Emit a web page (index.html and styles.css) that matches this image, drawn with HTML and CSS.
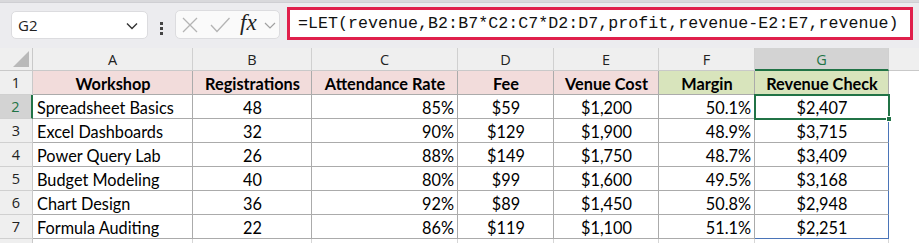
FILE: index.html
```html
<!DOCTYPE html>
<html>
<head>
<meta charset="utf-8">
<link rel="stylesheet" href="styles.css">
</head>
<body>
<div class="app">
  <div class="topstrip"></div>
  <div class="fbar">
    <div class="namebox">
      <span class="ref">G2</span>
      <svg class="chev" width="12" height="8" viewBox="0 0 12 8"><path d="M1 1.5 L6 6.5 L11 1.5" fill="none" stroke="#333" stroke-width="1.4"/></svg>
    </div>
    <div class="dots"><i></i><i></i><i></i></div>
    <div class="fxbox">
      <svg class="ic-x" width="16" height="16" viewBox="0 0 16 16"><path d="M1 1 L15 15 M15 1 L1 15" stroke="#b4b4b4" stroke-width="1.3" fill="none"/></svg>
      <svg class="ic-ok" width="20" height="16" viewBox="0 0 20 16"><path d="M1 8 L7 14.5 L19.5 1" stroke="#b4b4b4" stroke-width="1.3" fill="none"/></svg>
      <span class="fx">fx</span>
      <svg class="chev2" width="12" height="7" viewBox="0 0 12 7"><path d="M1 1 L6 6 L11 1" fill="none" stroke="#a0a0a0" stroke-width="1.2"/></svg>
    </div>
    <div class="formula">=LET(revenue,B2:B7*C2:C7*D2:D7,profit,revenue-E2:E7,revenue)</div>
  </div>
  <div class="sheet">
    <div class="corner"><svg width="16" height="16" viewBox="0 0 16 16"><path d="M16 0 L16 16 L0 16 Z" fill="#b9b9b9"/></svg></div>
    <div class="ch">A</div><div class="ch">B</div><div class="ch">C</div><div class="ch">D</div><div class="ch">E</div><div class="ch">F</div><div class="ch sel">G</div><div class="chrest"></div>

    <div class="rh">1</div>
    <div class="c hp">Workshop</div><div class="c hp">Registrations</div><div class="c hp">Attendance Rate</div><div class="c hp">Fee</div><div class="c hp">Venue Cost</div><div class="c hg">Margin</div><div class="c hg">Revenue Check</div><div class="rest"></div>

    <div class="rh rsel">2</div>
    <div class="c l">Spreadsheet Basics</div><div class="c m">48</div><div class="c r">85%</div><div class="c m">$59</div><div class="c m">$1,200</div><div class="c r">50.1%</div><div class="c m sp active">$2,407<span class="handle"></span></div><div class="rest"></div>

    <div class="rh">3</div>
    <div class="c l">Excel Dashboards</div><div class="c m">32</div><div class="c r">90%</div><div class="c m">$129</div><div class="c m">$1,900</div><div class="c r">48.9%</div><div class="c m sp">$3,715</div><div class="rest"></div>

    <div class="rh">4</div>
    <div class="c l">Power Query Lab</div><div class="c m">26</div><div class="c r">88%</div><div class="c m">$149</div><div class="c m">$1,750</div><div class="c r">48.7%</div><div class="c m sp">$3,409</div><div class="rest"></div>

    <div class="rh">5</div>
    <div class="c l">Budget Modeling</div><div class="c m">40</div><div class="c r">80%</div><div class="c m">$99</div><div class="c m">$1,600</div><div class="c r">49.5%</div><div class="c m sp">$3,168</div><div class="rest"></div>

    <div class="rh">6</div>
    <div class="c l">Chart Design</div><div class="c m">36</div><div class="c r">92%</div><div class="c m">$89</div><div class="c m">$1,450</div><div class="c r">50.8%</div><div class="c m sp">$2,948</div><div class="rest"></div>

    <div class="rh">7</div>
    <div class="c l">Formula Auditing</div><div class="c m">22</div><div class="c r">86%</div><div class="c m">$119</div><div class="c m">$1,100</div><div class="c r">51.1%</div><div class="c m sp last">$2,251</div><div class="rest"></div>

    <div class="rh"></div>
    <div class="e"></div><div class="e"></div><div class="e"></div><div class="e"></div><div class="e"></div><div class="e"></div><div class="e"></div><div class="rest"></div>
  </div>
</div>
</body>
</html>
```
FILE: styles.css
```css
* { box-sizing: border-box; }
html, body { margin: 0; padding: 0; background: #fff; }
.app { width: 919px; height: 243px; overflow: hidden; background: #fff; }
.topstrip { height: 3px; background: #d9d9dc; border-bottom: 1px solid #cfcfd3; }
.fbar {
  height: 45px; background: #ececef;
  display: flex; align-items: flex-start;
  padding: 4px 0 0 11px;
}
.namebox {
  width: 137px; height: 28px; margin-top: 4px;
  background: #fff; border: 1px solid #dcdcdf; border-radius: 5px;
  display: flex; align-items: center; justify-content: space-between;
  padding: 0 9px 0 6px;
  font-family: "Open Sans", "Noto Sans", sans-serif; font-size: 15px; color: #222;
}
.chev { margin-top: 2px; }
.dots { width: 27px; display: flex; flex-direction: column; align-items: center; gap: 2px; margin-top: 15px; }
.dots i { width: 3px; height: 3px; background: #444; display: block; }
.fxbox {
  width: 105px; height: 29px; margin-top: 3px;
  background: #fafafa; border: 1px solid #dcdcdf; border-radius: 5px;
  display: flex; align-items: center; padding: 0 0 0 6px;
}
.ic-x { margin-right: 12px; margin-top: 1px; }
.ic-ok { margin-right: 10px; margin-top: 1px; }
.fx { font-family: "Liberation Serif", "DejaVu Serif", serif; font-style: italic; font-size: 23px; color: #222; margin: -4px 7px 0 0; letter-spacing: 0; }
.chev2 { margin-top: 2px; }
.formula {
  width: 626px; height: 33px; margin-left: 7px; margin-top: 0;
  background: #fff; border: 3px solid #e0204c;
  font-family: "Liberation Mono", "DejaVu Sans Mono", monospace; font-size: 16.6px;
  color: #111; padding: 4px 0 0 8px; white-space: nowrap; letter-spacing: 0.05px;
}
.sheet {
  display: grid;
  grid-template-columns: 33px 160px 119px 146px 96px 105px 96px 134px 30px;
  grid-template-rows: 23px 24px 24px 24px 24px 24px 24px 24px 24px;
  font-family: "Lato", "Open Sans", sans-serif; font-size: 16.3px; color: #000;
}
.corner { background: #efefef; border-right: 1px solid #c9c9c9; border-bottom: 1px solid #c9c9c9; display: flex; align-items: flex-end; justify-content: flex-end; padding: 0 3px 3px 0; }
.ch {
  background: #efefef; border-right: 1px solid #d0d0d0; border-bottom: 1px solid #c9c9c9;
  display: flex; align-items: center; justify-content: center;
  font-family: "Open Sans", "Noto Sans", sans-serif; font-size: 14.5px; color: #222; padding-top: 1px;
}
.ch.sel { background: #d3d3d3; border-bottom: 2px solid #217346; color: #217346; }
.chrest { background: #efefef; border-bottom: 1px solid #c9c9c9; }
.rh {
  background: #efefef; border-right: 1px solid #c9c9c9; border-bottom: 1px solid #d0d0d0;
  display: flex; align-items: center; justify-content: center;
  font-family: "Open Sans", "Noto Sans", sans-serif; font-size: 14.5px; color: #222;
}
.rh.rsel { background: #d3d3d3; border-right: 2px solid #217346; color: #217346; }
.c {
  border-right: 1px solid #ababab; border-bottom: 1px solid #ababab;
  display: flex; align-items: center; white-space: nowrap; padding: 1px 3px 0 4px; position: relative;
}
.c.l { justify-content: flex-start; }
.c.m { justify-content: center; }
.c.r { justify-content: flex-end; }
.hp { background: #f2dcdb; font-weight: bold; justify-content: center; }
.hg { background: #d8e4bc; font-weight: bold; justify-content: center; }
.sp { border-right: 1px solid #4a74b8; }
.sp.last { border-bottom: 1px solid #4a74b8; }
.active { outline: 2px solid #217346; outline-offset: -1px; z-index: 2; }
.handle { position: absolute; right: -4px; bottom: -4px; width: 6px; height: 6px; background: #217346; border: 1px solid #fff; }
.e { border-right: 1px solid #d6d6d6; }
.rest { background: #fff; }
```
